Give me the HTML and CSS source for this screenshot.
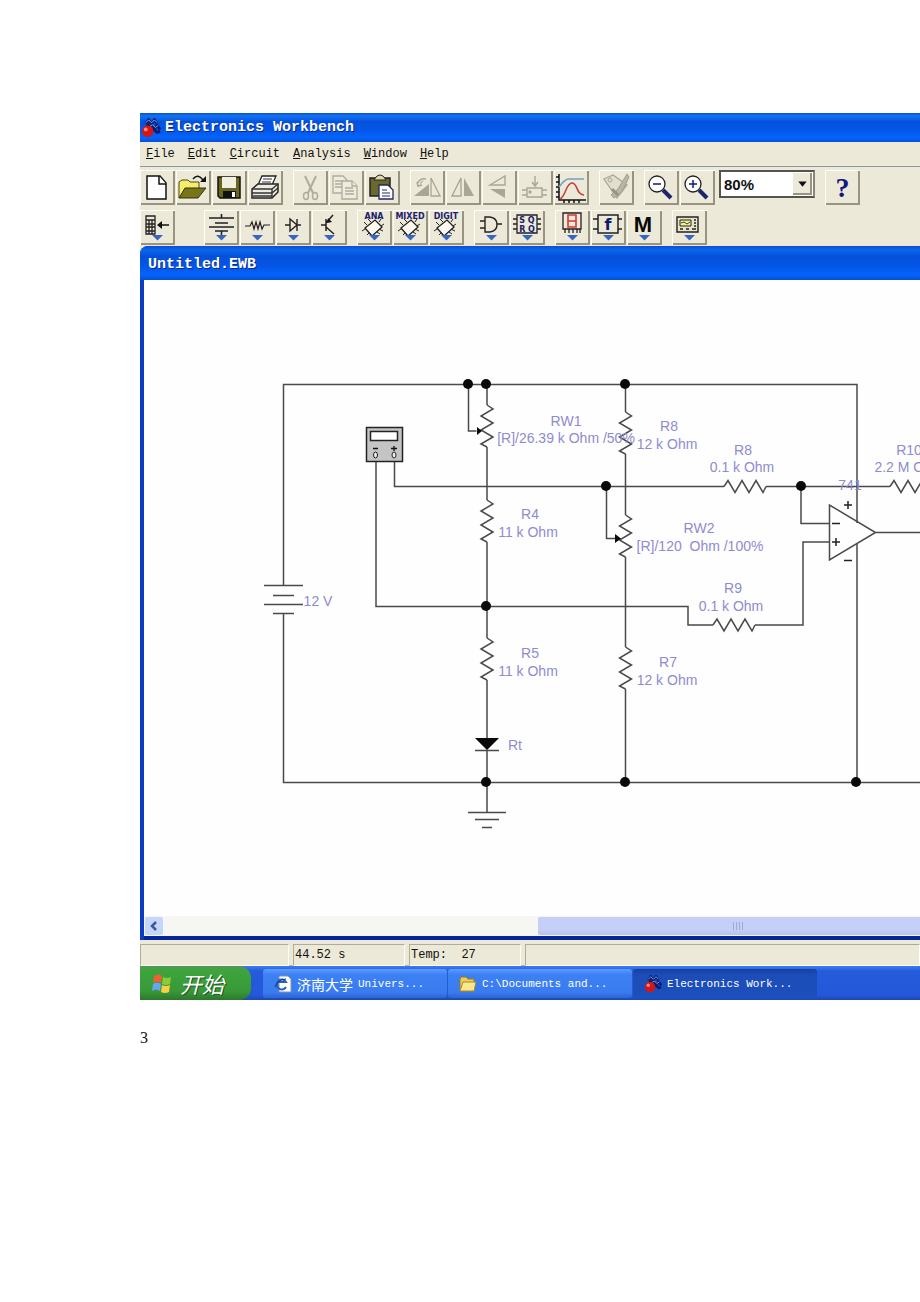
FILE: index.html
```html
<!DOCTYPE html>
<html lang="en">
<head>
<meta charset="utf-8">
<title>Electronics Workbench</title>
<link rel="stylesheet" href="styles.css">
</head>
<body>
<svg class="defs" aria-hidden="true">
  <defs>
    <g id="logo">
      <path d="M5 6l3-4 3 4 3-4 3 4M8 9l3-2 3 4 3-3 3 4M11 13l3-1 3 3 3-1" fill="none" stroke="#0a1a70" stroke-width="3"/>
      <path d="M5 5l3-3 3 3 3-3 3 3M9 9l3-2 3 3 3-2" fill="none" stroke="#7fb0f4" stroke-width="1"/>
      <path d="M6 9l2-3" stroke="#301010" stroke-width="2"/>
      <circle cx="7" cy="14" r="6" fill="#d81414"/>
      <circle cx="5" cy="12" r="2" fill="#ff8a80"/>
    </g>
    <path id="drop" d="M12 25h11l-5.500 5.500z" fill="#3566c4"/>
    <g id="chip">
      <path d="M8 18l10-8 7 7-10 9z" fill="#fbf9f0" stroke="#222" stroke-width="1.300"/>
      <path d="M10 15l-3-3M14 12l-3-3M22 12l2-3M24 16l3-2M8 19l-3 2M12 23l-2 2M20 22l3 2M22 19l4 2" stroke="#222"/>
    </g>
    <path id="rv" d="M0 0l6 4-12 7 12 7-12 7 12 7-12 7 6 3"/>
    <path id="rh" d="M0 0l4-6 7 12 7-12 7 12 7-12 7 12 3-6"/>
  </defs>
</svg>
<main class="page">
<section class="app">
  <header class="titlebar">
    <svg class="logo" viewBox="0 0 21 21"><use href="#logo"/></svg>
    <h1>Electronics Workbench</h1>
  </header>
  <nav class="menu">
    <button><u>F</u>ile</button><button><u>E</u>dit</button><button><u>C</u>ircuit</button><button><u>A</u>nalysis</button><button><u>W</u>indow</button><button><u>H</u>elp</button>
  </nav>
  <div class="toolbars">
    <div class="toolbar">
      <div class="group">
        <button class="tool" aria-label="New"><svg viewBox="0 0 35 35"><path d="M7 6h13l6 7v16H7z" fill="#fff" stroke="#111" stroke-width="1.500"/><path d="M19 6v8h7" fill="#fff" stroke="#111" stroke-width="1.500"/></svg></button>
        <button class="tool" aria-label="Open"><svg viewBox="0 0 35 35"><path d="M3 28V12l3-2h6l2 2h9v6" fill="#f6ee6a" stroke="#4a4810"/><path d="M3 28l6-10h21l-8 10z" fill="#77741a" stroke="#33320a"/><path d="M17 9q5-6 10 1" fill="none" stroke="#111" stroke-width="1.500"/><path d="M30 6v6h-6z" fill="#111"/></svg></button>
        <button class="tool" aria-label="Save"><svg viewBox="0 0 35 35"><path d="M6 7h22v21H8l-2-2z" fill="#68661c" stroke="#111" stroke-width="1.500"/><path d="M10 7h14v11H10z" fill="#f2efe0"/><path d="M11 21h13v7H11z" fill="#111"/><path d="M20 22h3v5h-3z" fill="#fff"/></svg></button>
        <button class="tool" aria-label="Print"><svg viewBox="0 0 35 35"><path d="M10 15l4-9h14l-4 9" fill="#fff" stroke="#222" stroke-width="1.300"/><path d="M15 9h9M14 12h9" stroke="#333"/><path d="M4 19l6-5h20v8l-6 6H4z" fill="#eeece0" stroke="#222" stroke-width="1.500"/><path d="M4 19h20l6-5M24 19v9M4 23h20l6-5M5 26h19" fill="none" stroke="#333" stroke-width="1.400"/></svg></button>
      </div>
      <div class="group">
        <button class="tool" aria-label="Cut" disabled><svg viewBox="0 0 35 35"><path d="M12 6l8 17M23 6l-8 17" fill="none" stroke="#b0ac9c" stroke-width="2"/><ellipse cx="13" cy="26" rx="2.500" ry="3.500" fill="none" stroke="#b0ac9c" stroke-width="1.500"/><ellipse cx="22" cy="26" rx="2.500" ry="3.500" fill="none" stroke="#b0ac9c" stroke-width="1.500"/></svg></button>
        <button class="tool" aria-label="Copy" disabled><svg viewBox="0 0 35 35"><g fill="#eeecdf" stroke="#b0ac9c" stroke-width="1.300"><path d="M4 6h10l4 4v13H4zM6 11h9M6 14h9M6 17h9"/><path d="M13 11h10l5 5v13H13z"/><path d="M23 11v5h5M16 18h8M16 21h9M16 24h9"/></g></svg></button>
        <button class="tool" aria-label="Paste"><svg viewBox="0 0 35 35"><path d="M5 8h20v18H5z" fill="#6a682a" stroke="#222" stroke-width="1.500"/><path d="M9 10l2-3q4-4 8 0l2 3z" fill="#dedab0" stroke="#222"/><path d="M14 15h9l5 5v9H14z" fill="#fff" stroke="#22266a" stroke-width="1.300"/><path d="M17 20h5M17 23h8M17 26h8" stroke="#22266a"/></svg></button>
      </div>
      <div class="group">
        <button class="tool" aria-label="Rotate" disabled><svg viewBox="0 0 35 35"><path d="M4 26h15V14zM9 16q-2-7 6-7" fill="#aaa696"/><path d="M9 16q-1-6 6-7" fill="none" stroke="#f4f2e8" stroke-width="2"/><path d="M8 13q2-5 8-4M7 12l1 4 4-1" fill="none" stroke="#aaa696" stroke-width="1.500"/><path d="M21 8v18h9z" fill="none" stroke="#aaa696" stroke-width="1.300"/></svg></button>
        <button class="tool" aria-label="Flip horizontal" disabled><svg viewBox="0 0 35 35"><path d="M15 8v18H6z" fill="none" stroke="#aaa696" stroke-width="1.400"/><path d="M18 8v18h10z" fill="#aaa696"/></svg></button>
        <button class="tool" aria-label="Flip vertical" disabled><svg viewBox="0 0 35 35"><path d="M23 6v9H8z" fill="none" stroke="#aaa696" stroke-width="1.400"/><path d="M23 28v-9H8z" fill="#aaa696"/></svg></button>
        <button class="tool" aria-label="Create subcircuit" disabled><svg viewBox="0 0 35 35"><g fill="none" stroke="#aaa696" stroke-width="1.400"><path d="M17 6v9M14 12l3 4 3-4M9 18h15v9H9zM4 20h5M4 25h5M24 20h5M24 25h5"/><circle cx="12" cy="22" r="1"/></g></svg></button>
        <button class="tool" aria-label="Display graphs"><svg viewBox="0 0 35 35"><path d="M5 4v26h27" fill="none" stroke="#111" stroke-width="1.500"/><path d="M2 7h3M2 12h3M2 17h3M2 22h3M2 27h3M10 30v3M15 30v3M20 30v3M25 30v3" stroke="#111" stroke-width="1.500"/><path d="M5 17q5-7 9-8h16" fill="none" stroke="#72a0c8" stroke-width="1.500"/><path d="M6 29c6-3 6-16 12-16s4 12 12 12" fill="none" stroke="#c83c3c" stroke-width="1.500"/></svg></button>
      </div>
      <div class="group">
        <button class="tool" aria-label="Component properties" disabled><svg viewBox="0 0 35 35"><path d="M5 9l9-4 14 10-10 13z" fill="#e2dfd0" stroke="#aaa696" stroke-width="1.300"/><circle cx="11" cy="10" r="2" fill="none" stroke="#aaa696"/><path d="M28 4l-9 15-7 6 3 3 8-6 7-15z" fill="#bab6a6" stroke="#a29e8e"/><path d="M13 19l6 6" stroke="#999584" stroke-width="3"/></svg></button>
      </div>
      <div class="group">
        <button class="tool" aria-label="Zoom out"><svg viewBox="0 0 35 35"><path d="M19 20l8 8" stroke="#20246c" stroke-width="4"/><circle cx="13" cy="14" r="8" fill="#fff" stroke="#222" stroke-width="1.300"/><path d="M9 14h8" stroke="#111b70" stroke-width="1.500"/></svg></button>
        <button class="tool" aria-label="Zoom in"><svg viewBox="0 0 35 35"><path d="M19 20l8 8" stroke="#20246c" stroke-width="4"/><circle cx="13" cy="14" r="8" fill="#fff" stroke="#222" stroke-width="1.300"/><path d="M9 14h8M13 10v8" stroke="#111b70" stroke-width="1.500"/></svg></button>
        <div class="combo">
          <select aria-label="Zoom level"><option>80%</option></select>
          <span class="combo-arrow"><svg viewBox="0 0 18 20"><path d="M5 8h8l-4 5z" fill="#111"/></svg></span>
        </div>
      </div>
      <div class="group">
        <button class="tool help" aria-label="Help">?</button>
      </div>
    </div>
    <div class="toolbar parts">
      <div class="group favorites">
        <button class="tool" aria-label="Favorites"><svg viewBox="0 0 35 35"><path d="M6 6h9v18H6zM6 10h9M6 14h9M6 17h9M6 21h9M9 10v14M12 10v14" fill="none" stroke="#222" stroke-width="1.300"/><path d="M19 15h10" stroke="#111" stroke-width="1.500"/><path d="M22 11v8l-5-4z" fill="#111"/><use href="#drop"/></svg></button>
      </div>
      <div class="group">
        <button class="tool" aria-label="Sources"><svg viewBox="0 0 35 35"><path d="M17.500 4v4M5 8h25M11 13h13M5 17h25M11 21h13M17.500 21v4" fill="none" stroke="#222" stroke-width="1.600"/><use href="#drop"/></svg></button>
        <button class="tool" aria-label="Basic"><svg viewBox="0 0 35 35"><path d="M5 16h5l2-4 2 7 2-7 2 7 2-7 2 7 2-4h6" fill="none" stroke="#222" stroke-width="1.200"/><use href="#drop"/></svg></button>
        <button class="tool" aria-label="Diodes"><svg viewBox="0 0 35 35"><path d="M9 15h5V9l7 6-7 6v-6M21 9v12M21 15h4" fill="none" stroke="#222" stroke-width="1.400"/><use href="#drop"/></svg></button>
        <button class="tool" aria-label="Transistors"><svg viewBox="0 0 35 35"><path d="M9 15h5M14 9v12M14 13l7-8M14 17l8 7" fill="none" stroke="#222" stroke-width="1.500"/><path d="M15 13l1-5 4 4z" fill="#111"/><use href="#drop"/></svg></button>
      </div>
      <div class="group">
        <button class="tool" aria-label="Analog ICs"><svg viewBox="0 0 35 35"><text class="tag" x="17" y="9">ANA</text><use href="#chip"/><use href="#drop"/></svg></button>
        <button class="tool" aria-label="Mixed ICs"><svg viewBox="0 0 35 35"><text class="tag" x="17" y="9">MIXED</text><use href="#chip"/><use href="#drop"/></svg></button>
        <button class="tool" aria-label="Digital ICs"><svg viewBox="0 0 35 35"><text class="tag" x="17" y="9">DIGIT</text><use href="#chip"/><use href="#drop"/></svg></button>
      </div>
      <div class="group">
        <button class="tool" aria-label="Logic gates"><svg viewBox="0 0 35 35"><path d="M6 11h5M6 18h5M11 7v15h5q7-1 7-7.500T16 7zM23 14h5" fill="none" stroke="#222" stroke-width="1.400"/><use href="#drop"/></svg></button>
        <button class="tool" aria-label="Digital"><svg viewBox="0 0 35 35"><path d="M7 5h20v18H7zM3 9h4M3 14h4M3 19h4M27 9h4M27 14h4M27 19h4" fill="none" stroke="#222" stroke-width="1.300"/><text class="tag" x="17" y="13">S Q</text><text class="tag" x="17" y="22">R Q</text><use href="#drop"/></svg></button>
      </div>
      <div class="group">
        <button class="tool" aria-label="Indicators"><svg viewBox="0 0 35 35"><path d="M8 3h18v16H8z" fill="#f8e6dc" stroke="#222" stroke-width="1.300"/><path d="M13 5h8v12h-8zM13 11h8" fill="none" stroke="#c84030" stroke-width="1.600"/><path d="M10 19v4M14 19v4M18 19v4M22 19v4M25 19v4" stroke="#222" stroke-width="1.300"/><use href="#drop"/></svg></button>
        <button class="tool" aria-label="Controls"><svg viewBox="0 0 35 35"><path d="M7 5h20v18H7zM2 9h5M2 19h5M27 9h4M27 19h4" fill="none" stroke="#222" stroke-width="1.500"/><text class="fn" x="17" y="20">f</text><use href="#drop"/></svg></button>
        <button class="tool" aria-label="Miscellaneous"><svg viewBox="0 0 35 35"><text class="misc" x="16" y="22">M</text><use href="#drop"/></svg></button>
      </div>
      <div class="group">
        <button class="tool" aria-label="Instruments"><svg viewBox="0 0 35 35"><path d="M5 7h21v15H5z" fill="#e8e6c8" stroke="#222" stroke-width="1.400"/><path d="M8 10h11v6H8z" fill="#f4f290" stroke="#222"/><path d="M9 13l3-1 3 2 3-2" fill="none" stroke="#444"/><path d="M22 10h2M22 13h2M22 16h2M8 19h3M14 19h3M20 19h4" stroke="#222" stroke-width="1.500"/><use href="#drop"/></svg></button>
      </div>
    </div>
  </div>
  <section class="document">
    <header class="doc-title"><h2>Untitled.EWB</h2></header>
    <div class="doc-body">
      <svg class="circuit" role="img" aria-label="Bridge amplifier circuit">
        <g transform="translate(-144 -280)">
          <g class="wire">
            <path d="M283.500 586V384.500H857V523M857 544V782M920 782.500H283.500V614"/>
            <path d="M468.500 384v47h8M487 384v21M487 447v53M487 542v96M487 680v58M487 750v62"/>
            <path d="M625.500 384v28M625.500 454v61M625.500 557v90M625.500 689v93"/>
            <path d="M394.500 462v24.500H724M766 486.500H890M376 462v144.500H688V625h25M755 625h48v-83h26"/>
            <path d="M606.500 487v51.500h9M801 487v36.500h28M876 532.500h44"/>
            <use href="#rv" x="487" y="405"/><use href="#rv" x="487" y="500"/><use href="#rv" x="487" y="638"/>
            <use href="#rv" x="625.500" y="412"/><use href="#rv" x="625.500" y="515"/><use href="#rv" x="625.500" y="647"/>
            <use href="#rh" x="724" y="486.500"/><use href="#rh" x="713" y="625"/><use href="#rh" x="890" y="486.500"/>
            <path d="M829.500 505v55l46-27.500z"/>
            <path d="M264 585.500h39M273 595.500h21M264 604.500h39M273 613.500h21"/>
            <path d="M475 750.500h24M468 812.500h38M475 819.500h24M482 827.500h10"/>
          </g>
          <g class="sign"><path d="M832 523.500h8M832 542h8M836 538v8M844 505h8M848 501v8M844 560.500h8"/></g>
          <g fill="#0a0a0a">
            <circle cx="468" cy="384" r="5"/><circle cx="486" cy="384" r="5"/><circle cx="625" cy="384" r="5"/>
            <circle cx="606" cy="486" r="5"/><circle cx="801" cy="486" r="5"/><circle cx="486" cy="606" r="5"/>
            <circle cx="486" cy="782" r="5"/><circle cx="625" cy="782" r="5"/><circle cx="856" cy="782" r="5"/>
            <path d="M475 738h24l-12 12zM477 427v8l5-4zM615 534v9l6-4.500z"/>
          </g>
          <path d="M366.500 427.500h36v34h-36z" fill="#c4c4c4" stroke="#222" stroke-width="1.500"/>
          <path d="M370.500 431.500h27v9h-27z" fill="#fff" stroke="#222" stroke-width="1.500"/>
          <path d="M373 448.500h5M391 448.500h6M394 446v5" stroke="#111" stroke-width="1.300"/>
          <ellipse cx="375.500" cy="455" rx="2" ry="3" fill="#eee" stroke="#222"/><ellipse cx="394" cy="455" rx="2" ry="3" fill="#eee" stroke="#222"/>
          <g class="label">
            <text x="566" y="426">RW1</text><text x="566" y="443">[R]/26.39 k Ohm /50%</text>
            <text x="669" y="431">R8</text><text x="667" y="449">12 k Ohm</text>
            <text x="743" y="455">R8</text><text x="742" y="472">0.1 k Ohm</text>
            <text x="909" y="455">R10</text><text x="909" y="472">2.2 M Ohm</text>
            <text x="850" y="490">741</text>
            <text x="530" y="519">R4</text><text x="528" y="537">11 k Ohm</text>
            <text x="699" y="533">RW2</text><text x="700" y="551" xml:space="preserve">[R]/120  Ohm /100%</text>
            <text x="733" y="593">R9</text><text x="731" y="611">0.1 k Ohm</text>
            <text x="318" y="606">12 V</text>
            <text x="530" y="658">R5</text><text x="528" y="676">11 k Ohm</text>
            <text x="668" y="667">R7</text><text x="667" y="685">12 k Ohm</text>
            <text x="515" y="750">Rt</text>
          </g>
        </g>
      </svg>
      <div class="scrollbar">
        <button class="scroll-left" aria-label="Scroll left"><svg viewBox="0 0 18 18"><path d="M11 5L7 9l4 4" fill="none" stroke="#3c5a94" stroke-width="2.500"/></svg></button>
        <span></span>
        <div class="thumb"><i></i><i></i><i></i><i></i></div>
      </div>
    </div>
  </section>
  <footer class="status">
    <span></span><span>44.52 s</span><span>Temp:&nbsp; 27</span><span></span>
  </footer>
  <div class="taskbar">
    <button class="start">
      <svg viewBox="0 0 24 24"><path d="M4 5q4-3 8 0l-1 7q-4-3-8 0z" fill="#f06030"/><path d="M13 6q4 2 8 0l-1 7q-4 2-8 0z" fill="#8ccc3c"/><path d="M3 13q4-3 8 0l-1 7q-4-3-8 0z" fill="#6aa4f4"/><path d="M12 14q4 2 8 0l-1 7q-4 2-8 0z" fill="#f8d040"/></svg>
      <span>开始</span>
    </button>
    <div class="tasks">
      <button class="task"><svg viewBox="0 0 18 18"><path d="M5 1h9l3 3v13H5z" fill="#fff" stroke="#8090a8"/><path d="M12 12a5 5 0 1 1 0-5H4" fill="none" stroke="#2460c0" stroke-width="2"/><path d="M1 12Q4 4 12 4" fill="none" stroke="#18387c"/></svg><span class="cjk">济南大学</span><span>Univers...</span></button>
      <button class="task"><svg viewBox="0 0 18 18"><path d="M1 4l1-2h5l2 2h6v12H1z" fill="#f0cc58" stroke="#9a7a20"/><path d="M1 16l3-9h13l-2 9z" fill="#fbe88c" stroke="#a88828"/></svg><span>C:\Documents and...</span></button>
      <button class="task active"><svg viewBox="0 0 21 21"><use href="#logo"/></svg><span>Electronics Work...</span></button>
    </div>
  </div>
</section>
<p class="page-number">3</p>
</main>
</body>
</html>
```
FILE: styles.css
```css
* { box-sizing: border-box; }
body {
  margin: 0;
  background: #fff;
  color: #111;
  font: 12px "Liberation Mono", "Noto Sans CJK SC", monospace;
}
button { font: inherit; color: inherit; border: 0; padding: 0; background: none; }
svg { display: block; }
.defs { position: absolute; width: 0; height: 0; }
.page { padding: 113px 0 250px 140px; overflow: hidden; }
.app { background: #ece9d8; }

.titlebar {
  display: flex;
  align-items: center;
  gap: 4px;
  height: 29px;
  padding-left: 1px;
  background: linear-gradient(#0a50d0, #1274f4 10%, #0452dc 30%, #0456e8 60%, #0564fc 85%, #0450d4);
}
.logo { width: 20px; height: 20px; }
h1, h2 {
  margin: 0;
  font-size: 15px;
  font-weight: bold;
  line-height: 20px;
  color: #fff;
  text-shadow: 1px 1px #0a2a80;
}

.menu {
  display: flex;
  gap: 13px;
  height: 25px;
  padding: 0 6px;
  align-items: center;
  border-bottom: 1px solid #8c94a8;
}

.toolbars { display: flex; flex-direction: column; gap: 5px; padding: 3px 0 1px; }
.toolbar { display: flex; gap: 10px; }
.group { display: flex; gap: 1px; flex: none; }
.favorites { margin-right: 19px; }
.tool {
  width: 35px;
  height: 35px;
  flex: none;
  background: #ece9d8;
  box-shadow: inset 1px 1px #fffef6, inset -2px -2px #98947f;
}
.tool svg { width: 35px; height: 35px; }
.help { font: bold 28px/35px "Liberation Serif", serif; color: #14187c; }
.tag { font: bold 8px "DejaVu Sans", sans-serif; fill: #20206c; text-anchor: middle; }
.fn { font: bold 16px "DejaVu Sans", sans-serif; fill: #14186c; text-anchor: middle; }
.misc { font: bold 22px "Liberation Sans", sans-serif; fill: #080808; text-anchor: middle; }
.combo { position: relative; width: 96px; height: 28px; margin-left: 3px; }
.combo select {
  appearance: none;
  width: 100%;
  height: 100%;
  padding: 0 3px;
  border: 2px solid #55534c;
  border-right-color: #8c8878;
  border-radius: 0;
  background: #fff;
  color: #111;
  font: bold 15px "Liberation Sans", sans-serif;
}
.combo-arrow {
  position: absolute;
  right: 3px;
  top: 3px;
  width: 19px;
  height: 22px;
  background: #ece9d8;
  box-shadow: inset -2px -2px #98947f;
  pointer-events: none;
}

.document { background: #0b3cc0; border-top-left-radius: 8px; }
.doc-title {
  display: flex;
  align-items: center;
  height: 34px;
  padding: 4px 8px 0;
  border-top-left-radius: 8px;
  background: linear-gradient(#0a50d0, #0c66ee 12%, #0450d8 30%, #0456e8 60%, #0564fc 85%, #0450d4);
}
.doc-body { margin-left: 4px; background: #fefefe; border-bottom: 4px solid #06279a; }
.circuit { width: 100%; height: 636px; overflow: hidden; }
.wire { fill: none; stroke: #4a4a4a; stroke-width: 1.500; }
.sign { fill: none; stroke: #222; stroke-width: 1.500; }
.label { font: 14px "Liberation Sans", sans-serif; fill: #8f8bcf; text-anchor: middle; }

.scrollbar {
  display: grid;
  grid-template-columns: 18px 375px 1fr;
  height: 20px;
  padding: 1px;
  overflow: hidden;
  background: #f6f6f3;
}
.scroll-left { background: #c6d5fc; border-radius: 2px; }
.thumb {
  display: flex;
  align-items: center;
  justify-content: center;
  gap: 2px;
  margin-right: -18px;
  border-radius: 2px;
  background: linear-gradient(#c4d0f8, #c6cff6 70%, #b4c4f0);
}
.thumb i { width: 1px; height: 8px; background: #98acd8; }

.status {
  display: grid;
  grid-template-columns: 149px 112px 112px 1fr;
  gap: 4px;
  height: 26px;
  padding-top: 4px;
  border-bottom: 1px solid #a8b4cc;
}
.status span {
  padding-left: 1px;
  line-height: 20px;
  border: 1px solid #b0ac9a;
  border-right-color: #fffef6;
  border-bottom-color: #fffef6;
}

.taskbar {
  display: flex;
  gap: 12px;
  height: 34px;
  background: linear-gradient(#3c7cf0, #245cdc 15%, #2458d8 85%, #1c48b4);
}
.start {
  display: flex;
  align-items: center;
  gap: 6px;
  width: 111px;
  flex: none;
  padding-left: 10px;
  border-radius: 0 12px 12px 0;
  background: linear-gradient(#4c9c4c, #3ca43c 20%, #389838 75%, #2c782c);
  color: #fff;
  font: italic 22px/30px "Noto Sans CJK SC", sans-serif;
  text-shadow: 1px 1px #1c541c;
}
.start svg { width: 24px; height: 24px; }
.tasks { display: flex; gap: 1px; padding: 3px 0 2px; }
.task {
  display: flex;
  align-items: center;
  gap: 5px;
  width: 184px;
  flex: none;
  padding-left: 11px;
  border-radius: 3px;
  background: linear-gradient(#5c9cfc, #3c80f4 20%, #3a7cf0 80%, #2c64d4);
  color: #fff;
  font-size: 11px;
}
.task svg { width: 18px; height: 18px; }
.cjk { font: 14px/18px "Noto Sans CJK SC", sans-serif; }
.active { background: linear-gradient(#1840a0, #1c4cb8 20%, #1c50bc); }

.page-number { margin: 0; padding-top: 28px; font: 16px/20px "Liberation Serif", serif; }
```
